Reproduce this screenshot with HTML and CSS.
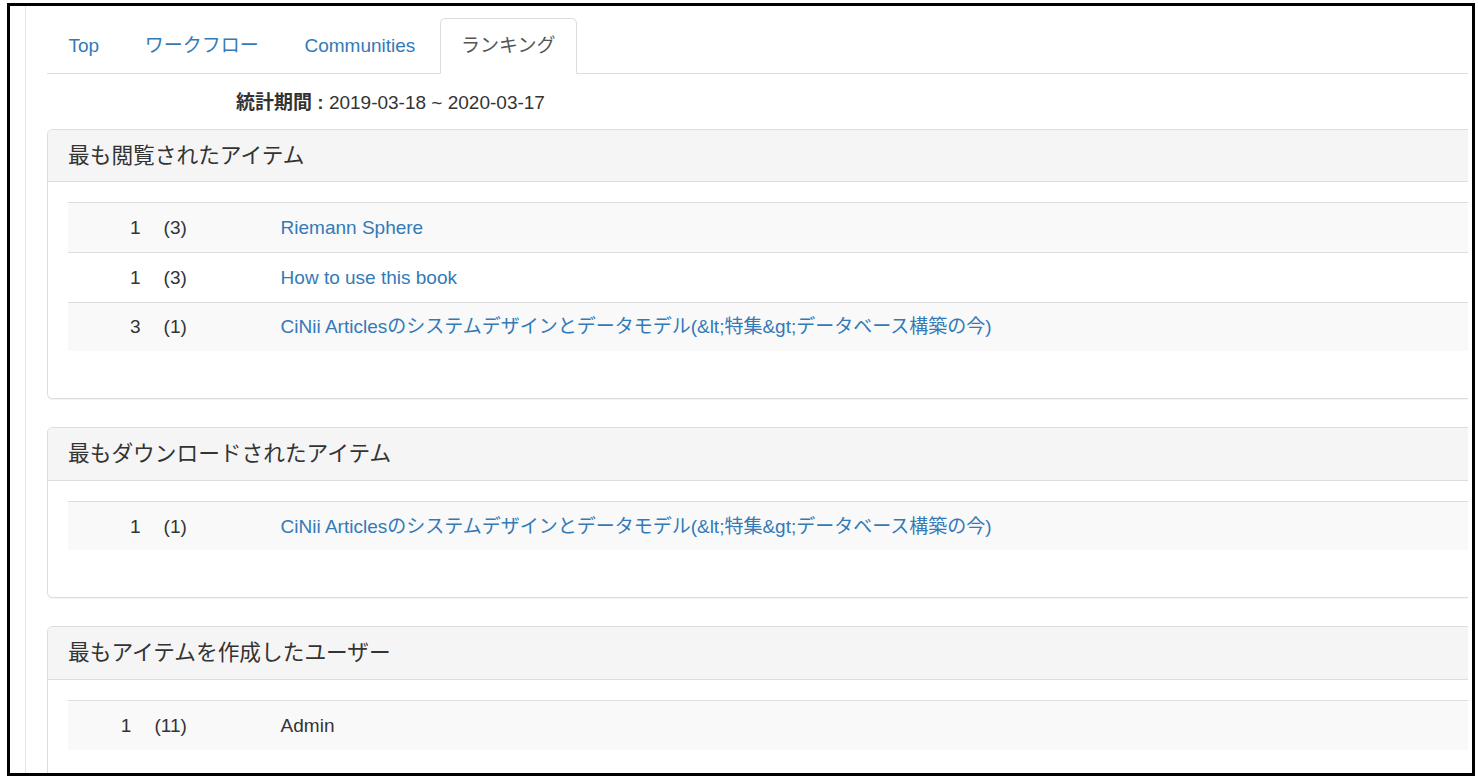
FILE: index.html
```html
<!DOCTYPE html>
<html lang="ja">
<head>
<meta charset="utf-8">
<title>ランキング</title>
<link rel="stylesheet" href="styles.css">
</head>
<body>
<div class="frame">
  <div class="viewport">
    <div class="content">
      <ul class="nav-tabs">
        <li><a href="#">Top</a></li>
        <li><a href="#">ワークフロー</a></li>
        <li><a href="#">Communities</a></li>
        <li class="active"><a href="#">ランキング</a></li>
      </ul>
      <div class="period"><strong>統計期間 :</strong> 2019-03-18 ~ 2020-03-17</div>

      <div class="panel">
        <div class="panel-heading">最も閲覧されたアイテム</div>
        <div class="panel-body">
          <table class="rank-table">
            <tr><td class="rank"><span>1</span><span class="count">(3)</span></td><td class="title"><a href="#">Riemann Sphere</a></td></tr>
            <tr><td class="rank"><span>1</span><span class="count">(3)</span></td><td class="title"><a href="#">How to use this book</a></td></tr>
            <tr><td class="rank"><span>3</span><span class="count">(1)</span></td><td class="title"><a href="#">CiNii Articlesのシステムデザインとデータモデル(&amp;lt;特集&amp;gt;データベース構築の今)</a></td></tr>
          </table>
        </div>
      </div>

      <div class="panel">
        <div class="panel-heading">最もダウンロードされたアイテム</div>
        <div class="panel-body">
          <table class="rank-table">
            <tr><td class="rank"><span>1</span><span class="count">(1)</span></td><td class="title"><a href="#">CiNii Articlesのシステムデザインとデータモデル(&amp;lt;特集&amp;gt;データベース構築の今)</a></td></tr>
          </table>
        </div>
      </div>

      <div class="panel">
        <div class="panel-heading">最もアイテムを作成したユーザー</div>
        <div class="panel-body">
          <table class="rank-table">
            <tr><td class="rank"><span>1</span><span class="count">(11)</span></td><td class="title">Admin</td></tr>
          </table>
        </div>
      </div>
    </div>
  </div>
</div>
</body>
</html>
```

FILE: styles.css
```css
html, body {
  margin: 0;
  padding: 0;
  background: #fff;
}

body {
  font-family: "Liberation Sans", Arial, "Noto Sans CJK JP", sans-serif;
  font-size: 19px;
  line-height: 27px;
  color: #333;
}

.frame {
  margin: 3px 0 0 7px;
  width: 1462px;
  height: 767px;
  border: 3px solid #000;
  background: #fff;
  overflow: hidden;
}

.viewport {
  margin-left: 15px;
  width: 1442px;
  height: 100%;
  border-left: 1px solid #e6e6e6;
  overflow: hidden;
}

.content {
  padding: 12px 0 0 21px;
  margin-right: -40px;
}

a {
  color: #337ab7;
  text-decoration: none;
}

.nav-tabs {
  list-style: none;
  margin: 0;
  padding: 0;
  display: flex;
  border-bottom: 1px solid #ddd;
}

.nav-tabs li {
  margin-right: 2.67px;
  margin-bottom: -1px;
}

.nav-tabs li a {
  display: block;
  padding: 13.4px 20.5px;
  line-height: 27px;
  border: 1px solid transparent;
  border-radius: 5.33px 5.33px 0 0;
}

.nav-tabs li.active a {
  color: #555;
  background: #fff;
  border-color: #ddd #ddd transparent;
}

.period {
  padding: 15px 0 13px 189px;
}

.period strong {
  font-weight: bold;
}

.panel {
  border: 1px solid #ddd;
  border-radius: 5.33px;
  margin-bottom: 28px;
  background: #fff;
  box-shadow: 0 1px 1px rgba(0,0,0,0.05);
}

.panel-heading {
  background: #f5f5f5;
  border-bottom: 1px solid #ddd;
  border-radius: 4.33px 4.33px 0 0;
  padding: 13.8px 20px;
  font-size: 21.7px;
  line-height: 24px;
  color: #333;
}

.panel-body {
  padding: 20px;
}

.rank-table {
  width: 100%;
  border-collapse: collapse;
  border-spacing: 0;
  margin-bottom: 27px;
}

.rank-table td {
  padding: 10.8px;
  line-height: 27px;
  border-top: 1px solid #ddd;
  vertical-align: top;
}

.rank-table tr:nth-child(odd) td {
  background: #f9f9f9;
}

.rank-table td.rank {
  width: 108px;
  text-align: right;
  white-space: nowrap;
}

.rank-table .count {
  margin-left: 23px;
}

.rank-table td.title {
  padding-left: 83px;
}
```
